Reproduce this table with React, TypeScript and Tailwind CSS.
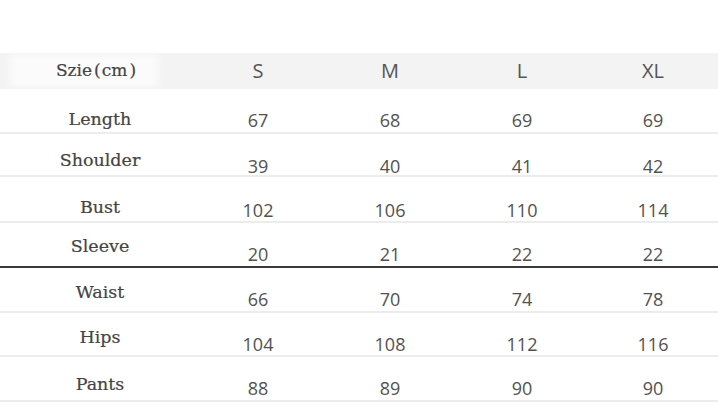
const sizes = ['S', 'M', 'L', 'XL'];

const rows = [
  { label: 'Length', values: ['67', '68', '69', '69'], h: 'h-[45px]', lp: 'pt-[22px]', np: 'pt-[22px]', line: 'border-[#ececec]' },
  { label: 'Shoulder', values: ['39', '40', '41', '42'], h: 'h-[43px]', lp: 'pt-[18px]', np: 'pt-[23px]', line: 'border-[#ececec]' },
  { label: 'Bust', values: ['102', '106', '110', '114'], h: 'h-[46px]', lp: 'pt-[22px]', np: 'pt-[24px]', line: 'border-[#ececec]' },
  { label: 'Sleeve', values: ['20', '21', '22', '22'], h: 'h-[45px]', lp: 'pt-[15px]', np: 'pt-[22px]', line: 'border-[#3a3a3a]' },
  { label: 'Waist', values: ['66', '70', '74', '78'], h: 'h-[45px]', lp: 'pt-[16px]', np: 'pt-[22px]', line: 'border-[#ececec]' },
  { label: 'Hips', values: ['104', '108', '112', '116'], h: 'h-[44px]', lp: 'pt-[16px]', np: 'pt-[22px]', line: 'border-[#ececec]' },
  { label: 'Pants', values: ['88', '89', '90', '90'], h: 'h-[45px]', lp: 'pt-[19px]', np: 'pt-[22px]', line: 'border-[#ececec]' },
];

const serif = "font-['DejaVu_Serif','Liberation_Serif',serif] [-webkit-text-stroke:0.2px_#444]";
const sans = "font-['Open_Sans','Noto_Sans',sans-serif]";

export default function App() {
  return (
    <div className="w-[718px] h-[416px] bg-white pt-[53px] overflow-hidden">
      {/* header */}
      <div className="relative grid grid-cols-[192px_132px_132px_132px_130px] h-[36px] bg-[#f3f3f3]">
        <div className="absolute left-[10px] top-[2px] w-[148px] h-[32px] bg-[#fbfbfb] blur-[3px]" />
        <div className={`relative text-center pt-[9px] text-[17px] leading-none text-[#444] ${serif}`}>
          Szie<span className="ml-[2px] mr-[1px]">(</span>cm<span className="ml-[2px]">)</span>
        </div>
        {sizes.map((s) => (
          <div key={s} className={`text-center pt-[8px] text-[20px] leading-none text-[#555] ${sans}`}>
            {s}
          </div>
        ))}
      </div>

      {rows.map((r) => (
        <div
          key={r.label}
          className={`grid grid-cols-[192px_132px_132px_132px_130px] border-b-2 ${r.h} ${r.line}`}
        >
          <div className={`pl-[8px] text-center text-[17.5px] leading-none text-[#444] ${serif} ${r.lp}`}>
            {r.label}
          </div>
          {r.values.map((v, i) => (
            <div key={i} className={`text-center text-[18px] leading-none text-[#525252] ${sans} ${r.np}`}>
              {v}
            </div>
          ))}
        </div>
      ))}
    </div>
  );
}
